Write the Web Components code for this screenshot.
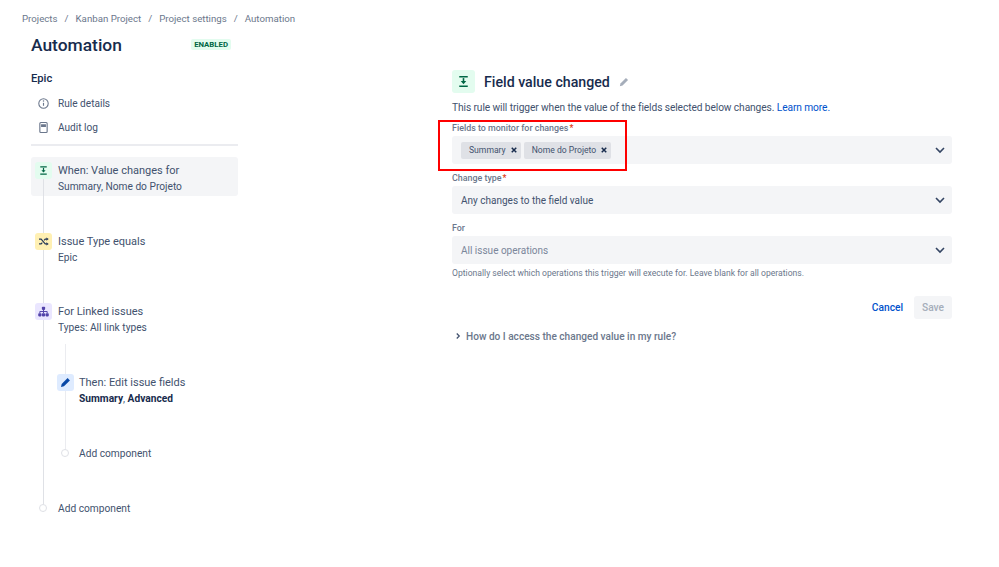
<!DOCTYPE html>
<html lang="en">
<head>
<meta charset="utf-8">
<title>Automation</title>
<style>
    html, body { margin: 0; background: #fff; }
    body { font-family: Roboto, "Noto Sans", sans-serif; color: #42526e; }
</style>
</head>
<body>
<automation-page></automation-page>

<script>
const ICONS = {
    trigger: '<path d="M4 3.5h8M4 12.5h8" stroke="currentColor" stroke-width="1.5"/><path d="M8 4.8v4" stroke="currentColor" stroke-width="1.5"/><path d="M5.4 7.6h5.2L8 10.6z" fill="currentColor"/>',
    shuffle: '<path d="M2.5 5h2.6l5 6h2M2.5 11h2.6l1.4-1.7M8.7 6.7 10.1 5h2" fill="none" stroke="currentColor" stroke-width="1.4"/><path d="M11.5 3l3 2-3 2zM11.5 9l3 2-3 2z" fill="currentColor"/>',
    tree: '<rect x="6" y="2" width="4" height="4" rx="1" fill="currentColor"/><rect x="1.5" y="10" width="4" height="4" rx="1" fill="currentColor"/><rect x="6" y="10" width="4" height="4" rx="1" fill="currentColor"/><rect x="10.5" y="10" width="4" height="4" rx="1" fill="currentColor"/><path d="M3.5 10V8h9v2M8 6v4" fill="none" stroke="currentColor" stroke-width="1.2"/>',
    pencil: '<path d="M10.6 2.6l2.8 2.8-7.3 7.3-3.6.8.8-3.6z" fill="currentColor"/>',
    info: '<circle cx="8" cy="8" r="5.8" fill="none" stroke="currentColor" stroke-width="1.3"/><path d="M8 7.2v3.6" stroke="currentColor" stroke-width="1.4"/><circle cx="8" cy="5" r=".9" fill="currentColor"/>',
    log: '<rect x="3.5" y="1.8" width="9" height="12.4" rx="1.2" fill="none" stroke="currentColor" stroke-width="1.4"/><path d="M5 4h6v3.4H5z" fill="currentColor"/>',
    chevron: '<path d="M4 6l4 4 4-4" fill="none" stroke="currentColor" stroke-width="1.6"/>',
    close: '<path d="M5 5l6 6M11 5l-6 6" fill="none" stroke="currentColor" stroke-width="2"/>',
    right: '<path d="M6 4l4 4-4 4" fill="none" stroke="currentColor" stroke-width="2"/>'
};

function icon(name, size) {
    return `<svg width="${size}" height="${size}" viewBox="0 0 16 16" aria-hidden="true">${ICONS[name]}</svg>`;
}

class RuleStep extends HTMLElement {
    connectedCallback() {
        const kind = this.getAttribute('kind');
        this.attachShadow({ mode: 'open' }).innerHTML = `
            <style>
                :host { display: block; height: 39px; box-sizing: border-box; border-radius: 3px; padding-left: 4px; }
                :host([selected]) { background: #f4f5f7; }
                .row { display: flex; gap: var(--step-gap, 6px); padding-top: 5px; }
                .badge { flex: none; width: 17px; height: 17px; border-radius: 3px; position: relative; z-index: 1;
                         display: flex; align-items: center; justify-content: center; }
                .trigger { background: #e3fcef; color: #006644; }
                .shuffle { background: #fff0b3; color: #253858; }
                .tree { background: #eae6ff; color: #5243aa; }
                .pencil { background: #deebff; color: #0747a6; }
                .title { font-size: 11px; line-height: 16px; padding-top: 1px; color: #42526e; white-space: nowrap; }
                .sub { font-size: 10.2px; line-height: 16px; color: #42526e; white-space: nowrap; }
                ::slotted(b) { color: #172b4d; font-weight: 700; }
            </style>
            <div class="row">
                <span class="badge ${kind}">${icon(kind, 13)}</span>
                <div>
                    <div class="title">${this.getAttribute('title')}</div>
                    <div class="sub"><slot></slot></div>
                </div>
            </div>`;
    }
}

class AddComponent extends HTMLElement {
    connectedCallback() {
        this.attachShadow({ mode: 'open' }).innerHTML = `
            <style>
                :host { display: flex; align-items: center; gap: calc(var(--step-gap, 6px) + 4px); padding-left: 8px; height: 16px;
                        font-size: 10.2px; color: #42526e; }
                i { width: 6px; height: 6px; border: 1px solid #dfe1e6; border-radius: 50%; background: #fff; margin-right: 1px;
                    position: relative; z-index: 1; }
            </style>
            <i></i><span>Add component</span>`;
    }
}

class RuleSidebar extends HTMLElement {
    connectedCallback() {
        this.attachShadow({ mode: 'open' }).innerHTML = `
            <style>
                :host { display: block; width: 207px; }
                .head { display: flex; align-items: center; justify-content: space-between; height: 24px; padding-right: 7px; }
                h1 { margin: 0; font-size: 17.4px; font-weight: 500; color: #172b4d; }
                .loz { font-size: 7.8px; font-weight: 700; line-height: 11px; padding: 0 3px; background: #e3fcef;
                       color: #006644; border-radius: 2px; margin-bottom: 2px; }
                h2 { margin: 14px 0 0; font-size: 11.2px; line-height: 16px; font-weight: 500; color: #172b4d; }
                nav { margin-top: 8px; display: flex; flex-direction: column; gap: 8px; border-bottom: 2px solid #ebecf0; padding-bottom: 9px; }
                nav a { display: flex; align-items: center; gap: 8px; padding-left: 6px; height: 16px;
                        font-size: 10.1px; color: #42526e; }
                nav svg { color: #6b778c; }
                .flow { position: relative; margin-top: 11px; }
                .rail { position: absolute; left: 12px; top: 22px; bottom: 4px; width: 1px; background: #dfe1e6; }
                .nested-rail { position: absolute; left: 34px; top: 187px; height: 108px; width: 1px; background: #ebecf0; }
                .gap { height: 32px; }
                .gap.short { height: 31px; }
                .nested { margin: 32px 0 0 22px; --step-gap: 5px; }
                .nested rule-step { width: 170px; }
                .nested add-component { margin-top: 37px; }
                .outer-add { margin-top: 39px; }
            </style>
            <div class="head"><h1>Automation</h1><span class="loz">ENABLED</span></div>
            <h2>Epic</h2>
            <nav>
                <a>${icon('info', 13)}<span>Rule details</span></a>
                <a>${icon('log', 13)}<span>Audit log</span></a>
            </nav>
            <div class="flow">
                <div class="rail"></div>
                <div class="nested-rail"></div>
                <rule-step kind="trigger" selected title="When: Value changes for">Summary, Nome do Projeto</rule-step>
                <div class="gap"></div>
                <rule-step kind="shuffle" title="Issue Type equals">Epic</rule-step>
                <div class="gap short"></div>
                <rule-step kind="tree" title="For Linked issues">Types: All link types</rule-step>
                <div class="nested">
                    <rule-step kind="pencil" title="Then: Edit issue fields"><b>Summary</b>, <b>Advanced</b></rule-step>
                    <add-component></add-component>
                </div>
                <add-component class="outer-add"></add-component>
            </div>`;
    }
}

class TagChip extends HTMLElement {
    connectedCallback() {
        this.attachShadow({ mode: 'open' }).innerHTML = `
            <style>
                :host { display: inline-flex; align-items: center; height: 17px; background: #dfe1e6; border-radius: 2px;
                        padding: 0 1px 0 8px; font-size: 8.6px; line-height: 19px; color: #42526e; gap: 2px; }
                svg { color: #172b4d; }
            </style>
            <slot></slot>${icon('close', 12)}`;
    }
}

class SelectField extends HTMLElement {
    connectedCallback() {
        const label = this.getAttribute('label');
        const req = this.hasAttribute('required') ? '<em>*</em>' : '';
        this.attachShadow({ mode: 'open' }).innerHTML = `
            <style>
                :host { display: block; }
                label { display: block; height: 14px; line-height: 14px; font-size: 8.9px; font-weight: 500; color: #6b778c; white-space: nowrap; }
                em { color: #de350b; font-style: normal; margin-left: 1px; }
                .box { height: 28px; background: #f4f5f7; border-radius: 3px; display: flex; align-items: center;
                       justify-content: space-between; padding: 0 4px 0 9px; margin-top: 1px; font-size: 10px; color: #42526e; }
                :host([placeholder]) .box { color: #7a869a; }
                .vals { display: flex; gap: 3px; }
                svg { color: #344563; }
            </style>
            <label>${label}${req}</label>
            <div class="box"><div class="vals"><slot></slot></div>${icon('chevron', 16)}</div>`;
    }
}

class TriggerForm extends HTMLElement {
    connectedCallback() {
        this.attachShadow({ mode: 'open' }).innerHTML = `
            <style>
                :host { display: block; width: 500px; position: relative; }
                .head { display: flex; align-items: center; gap: 9px; height: 23px; }
                .badge { width: 23px; height: 23px; background: #e3fcef; color: #006644; border-radius: 3px;
                         display: flex; align-items: center; justify-content: center; }
                h2 { margin: 0; font-size: 14.2px; font-weight: 500; color: #172b4d; }
                .edit { color: #a5adba; margin-left: -1px; display: flex; }
                p { margin: 8px 0 0; font-size: 10.2px; letter-spacing: -.09px; line-height: 14px; color: #42526e; white-space: nowrap; }
                p a { color: #0052cc; }
                .fields { margin-top: 6px; display: flex; flex-direction: column; gap: 7px; }
                .help { margin: 3px 0 0; font-size: 8.6px; line-height: 12px; color: #6b778c; }
                .actions { display: flex; justify-content: flex-end; align-items: center; gap: 11px; margin-top: 17px; }
                .cancel { font-size: 10.2px; font-weight: 500; color: #0052cc; }
                .save { width: 38px; height: 23px; background: #f4f5f7; color: #a5adba; border-radius: 3px; font-size: 10.2px;
                        font-weight: 500; display: flex; align-items: center; justify-content: center; }
                .more { display: flex; align-items: center; gap: 3px; margin-top: 9px; font-size: 10.1px; font-weight: 500; color: #6b778c; height: 16px; }
                .more svg { color: #42526e; margin-left: 1px; }
                .mark { position: absolute; left: -14px; top: 50px; width: 185px; height: 47px; border: 2px solid #fe0000; }
            </style>
            <div class="head">
                <span class="badge">${icon('trigger', 17)}</span>
                <h2>Field value changed</h2>
                <span class="edit">${icon('pencil', 12)}</span>
            </div>
            <p>This rule will trigger when the value of the fields selected below changes. <a>Learn more.</a></p>
            <div class="fields">
                <select-field label="Fields to monitor for changes" required>
                    <tag-chip>Summary</tag-chip><tag-chip>Nome do Projeto</tag-chip>
                </select-field>
                <select-field label="Change type" required>Any changes to the field value</select-field>
                <select-field label="For" placeholder>All issue operations</select-field>
            </div>
            <div class="help">Optionally select which operations this trigger will execute for. Leave blank for all operations.</div>
            <div class="actions"><span class="cancel">Cancel</span><span class="save">Save</span></div>
            <div class="more">${icon('right', 10)}<span>How do I access the changed value in my rule?</span></div>
            <div class="mark"></div>`;
    }
}

class AutomationPage extends HTMLElement {
    connectedCallback() {
        this.attachShadow({ mode: 'open' }).innerHTML = `
            <style>
                :host { display: block; width: 999px; height: 567px; overflow: hidden; }
                .crumbs { padding: 12px 0 0 22px; height: 21px; font-size: 9.7px; line-height: 14px; color: #6b778c; display: flex; gap: 7px; }
                .main { display: flex; padding-left: 31px; }
                .form { margin: 37px 0 0 214px; }
            </style>
            <div class="crumbs">
                <span>Projects</span><span>/</span><span>Kanban Project</span><span>/</span><span>Project settings</span><span>/</span><span>Automation</span>
            </div>
            <div class="main">
                <rule-sidebar></rule-sidebar>
                <trigger-form class="form"></trigger-form>
            </div>`;
    }
}

customElements.define('rule-step', RuleStep);
customElements.define('add-component', AddComponent);
customElements.define('rule-sidebar', RuleSidebar);
customElements.define('tag-chip', TagChip);
customElements.define('select-field', SelectField);
customElements.define('trigger-form', TriggerForm);
customElements.define('automation-page', AutomationPage);
</script>
</body>
</html>
